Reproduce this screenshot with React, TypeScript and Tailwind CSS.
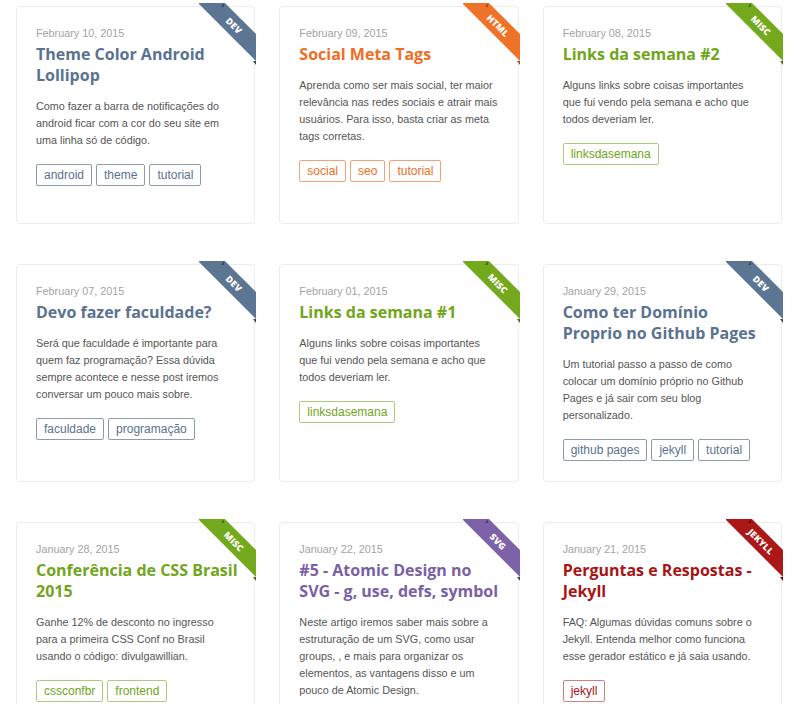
import React from "react";

type Cat = "DEV" | "HTML" | "MISC" | "SVG" | "JEKYLL";

const CAT: Record<Cat, { text: string; band: string; foldT: string; foldB: string; tag: string }> = {
  DEV: { text: "text-[#5a7290]", band: "bg-[#5c7592]", foldT: "border-t-[#38485b]", foldB: "border-b-[#38485b]", tag: "border-[#8b9cb1] text-[#5a7290]" },
  HTML: { text: "text-[#ee6e24]", band: "bg-[#ee7328]", foldT: "border-t-[#a64b14]", foldB: "border-b-[#a64b14]", tag: "border-[#f2a277] text-[#ee6e24]" },
  MISC: { text: "text-[#71a51b]", band: "bg-[#74a81d]", foldT: "border-t-[#4a6d10]", foldB: "border-b-[#4a6d10]", tag: "border-[#a9cd7c] text-[#71a51b]" },
  SVG: { text: "text-[#7a5fa6]", band: "bg-[#7d62a9]", foldT: "border-t-[#4f3c70]", foldB: "border-b-[#4f3c70]", tag: "border-[#b2a1cc] text-[#7a5fa6]" },
  JEKYLL: { text: "text-[#a81414]", band: "bg-[#ac1717]", foldT: "border-t-[#6a0909]", foldB: "border-b-[#6a0909]", tag: "border-[#d28080] text-[#a81414]" },
};

type Post = { date: string; title: string[]; cat: Cat; body: string[]; tags: string[] };

const posts: Post[] = [
  {
    date: "February 10, 2015",
    title: ["Theme Color Android", "Lollipop"],
    cat: "DEV",
    body: ["Como fazer a barra de notificações do", "android ficar com a cor do seu site em", "uma linha só de código."],
    tags: ["android", "theme", "tutorial"],
  },
  {
    date: "February 09, 2015",
    title: ["Social Meta Tags"],
    cat: "HTML",
    body: ["Aprenda como ser mais social, ter maior", "relevância nas redes sociais e atrair mais", "usuários. Para isso, basta criar as meta", "tags corretas."],
    tags: ["social", "seo", "tutorial"],
  },
  {
    date: "February 08, 2015",
    title: ["Links da semana #2"],
    cat: "MISC",
    body: ["Alguns links sobre coisas importantes", "que fui vendo pela semana e acho que", "todos deveriam ler."],
    tags: ["linksdasemana"],
  },
  {
    date: "February 07, 2015",
    title: ["Devo fazer faculdade?"],
    cat: "DEV",
    body: ["Será que faculdade é importante para", "quem faz programação? Essa dúvida", "sempre acontece e nesse post iremos", "conversar um pouco mais sobre."],
    tags: ["faculdade", "programação"],
  },
  {
    date: "February 01, 2015",
    title: ["Links da semana #1"],
    cat: "MISC",
    body: ["Alguns links sobre coisas importantes", "que fui vendo pela semana e acho que", "todos deveriam ler."],
    tags: ["linksdasemana"],
  },
  {
    date: "January 29, 2015",
    title: ["Como ter Domínio", "Proprio no Github Pages"],
    cat: "DEV",
    body: ["Um tutorial passo a passo de como", "colocar um domínio próprio no Github", "Pages e já sair com seu blog", "personalizado."],
    tags: ["github pages", "jekyll", "tutorial"],
  },
  {
    date: "January 28, 2015",
    title: ["Conferência de CSS Brasil", "2015"],
    cat: "MISC",
    body: ["Ganhe 12% de desconto no ingresso", "para a primeira CSS Conf no Brasil", "usando o código: divulgawillian."],
    tags: ["cssconfbr", "frontend"],
  },
  {
    date: "January 22, 2015",
    title: ["#5 - Atomic Design no", "SVG - g, use, defs, symbol"],
    cat: "SVG",
    body: ["Neste artigo iremos saber mais sobre a", "estruturação de um SVG, como usar", "groups, , e mais para organizar os", "elementos, as vantagens disso e um", "pouco de Atomic Design."],
    tags: [],
  },
  {
    date: "January 21, 2015",
    title: ["Perguntas e Respostas -", "Jekyll"],
    cat: "JEKYLL",
    body: ["FAQ: Algumas dúvidas comuns sobre o", "Jekyll. Entenda melhor como funciona", "esse gerador estático e já saia usando."],
    tags: ["jekyll"],
  },
];

function Ribbon({ cat }: { cat: Cat }) {
  const c = CAT[cat];
  return (
    <>
      <div className="absolute -top-[4px] -right-[2px] w-[57px] h-[58px] overflow-hidden pointer-events-none">
        <div
          className={`absolute left-[-6px] top-[13px] w-[82px] h-[19px] rotate-45 ${c.band} flex items-center justify-center text-white font-['Open_Sans',sans-serif] font-extrabold text-[9px] leading-none tracking-[0.2px]`}
        >
          {cat}
        </div>
      </div>
      <div className={`absolute right-[-2px] top-[54px] w-0 h-0 border-t-[4px] ${c.foldT} border-l-[3px] border-l-transparent`} />
      <div className={`absolute right-[30px] top-[-4px] w-0 h-0 border-b-[4px] ${c.foldB} border-l-[3px] border-l-transparent`} />
    </>
  );
}

function Card({ p }: { p: Post }) {
  const c = CAT[p.cat];
  return (
    <div className="relative h-[218px] bg-white border border-[#ececec] rounded-[4px] pl-[19px] pr-[12px] pt-[18px]">
      <Ribbon cat={p.cat} />
      <div className="text-[10.8px] leading-[16px] text-[#a3a3a3] font-['Liberation_Sans',Arial,sans-serif]">{p.date}</div>
      <h2 className={`mt-[3px] text-[16px] leading-[21px] font-bold font-['Open_Sans',sans-serif] whitespace-nowrap ${c.text}`}>
        {p.title.map((t, i) => (
          <div key={i}>{t}</div>
        ))}
      </h2>
      <p className="mt-[12px] text-[10.8px] leading-[17px] text-[#555555] font-['Liberation_Sans',Arial,sans-serif] whitespace-nowrap">
        {p.body.map((t, i) => (
          <span key={i} className="block">
            {t}
          </span>
        ))}
      </p>
      {p.tags.length > 0 && (
        <div className="mt-[15px] flex flex-wrap gap-[4px]">
          {p.tags.map((t) => (
            <span
              key={t}
              className={`h-[22px] px-[7px] flex items-center border rounded-[2px] text-[12px] font-['Liberation_Sans',Arial,sans-serif] ${c.tag}`}
            >
              {t}
            </span>
          ))}
        </div>
      )}
    </div>
  );
}

export default function App() {
  return (
    <div className="w-[800px] h-[704px] overflow-hidden bg-white">
      <div className="pl-[16px] pt-[6px] w-[782px] grid grid-cols-3 gap-x-[24px] gap-y-[40px]">
        {posts.map((p, i) => (
          <Card key={i} p={p} />
        ))}
      </div>
    </div>
  );
}
